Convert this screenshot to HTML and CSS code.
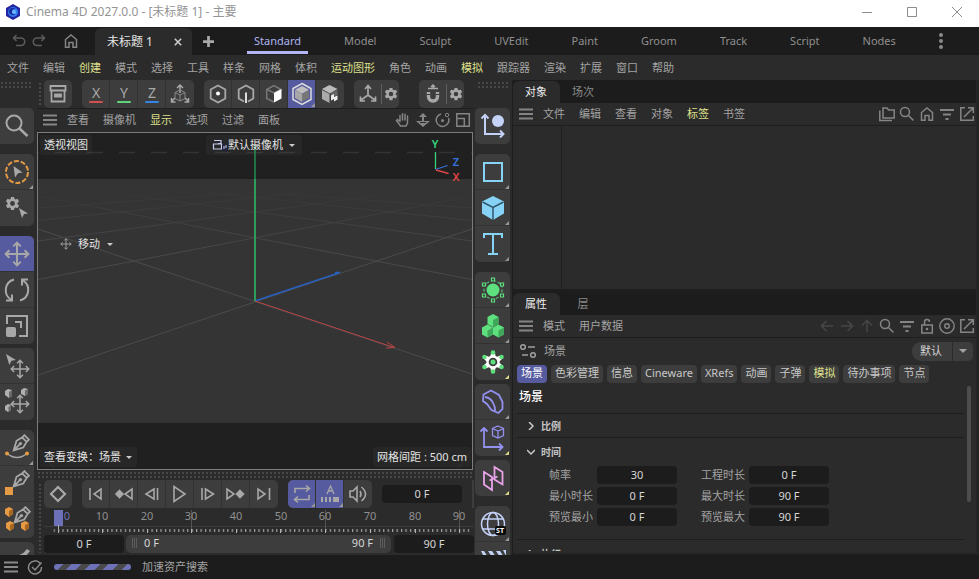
FILE: index.html
```html
<!DOCTYPE html>
<html lang="zh-CN">
<head>
<meta charset="utf-8">
<title>Cinema 4D 2027.0.0 - [未标题 1] - 主要</title>
<link rel="stylesheet" href="styles.css">
</head>
<body>
<svg class="defs" aria-hidden="true">
  <symbol id="gear" viewBox="-8 -8 16 16"><path fill="currentColor" fill-rule="evenodd" d="M-1.6-7h3.2l.5 2.2 1.2.6 2.1-.8 1.6 2.8-1.7 1.5v1.4l1.7 1.5-1.6 2.8-2.1-.8-1.2.6-.5 2.2h-3.2l-.5-2.2-1.2-.6-2.1.8-1.6-2.8 1.7-1.5v-1.4l-1.7-1.5 1.6-2.8 2.1.8 1.2-.6zM0-2.6a2.6 2.6 0 1 0 0 5.2 2.6 2.6 0 0 0 0-5.2z"/></symbol>
  <symbol id="burger" viewBox="0 0 16 16"><path d="M1 3.500h14M1 8h14M1 12.500h14" stroke="currentColor" stroke-width="2"/></symbol>
  <symbol id="search" viewBox="0 0 16 16"><g fill="none" stroke="currentColor" stroke-width="1.500"><circle cx="6" cy="6" r="4.500"/><path d="M9.500 9.500l5 5"/></g></symbol>
  <symbol id="home" viewBox="0 0 16 16"><path fill="none" stroke="currentColor" stroke-width="1.500" d="M2.500 14.200V6.500L8 2l5.500 4.500v7.700h-3.500V9.500H6v4.700z"/></symbol>
  <symbol id="filter" viewBox="0 0 16 16"><path stroke="currentColor" stroke-width="2" d="M1 4h14M4 8.500h8M6.500 13h3"/></symbol>
  <symbol id="popout" viewBox="0 0 16 16"><path fill="none" stroke="currentColor" stroke-width="1.500" d="M6 1.800H1.800v12.500h12.500V10M9 1.800h5.300V7M14 2L5 11"/></symbol>
  <symbol id="cursor" viewBox="0 0 10 10"><path fill="currentColor" d="M0 0l9 5.500-4 .6-2 3.900z"/></symbol>
  <symbol id="move" viewBox="-12 -12 24 24"><path fill="none" stroke="currentColor" stroke-width="1.800" d="M0-10V10M-10 0H10M-3.500-7L0-10.500 3.500-7M-3.500 7L0 10.500 3.500 7M-7-3.500L-10.500 0-7 3.500M7-3.500L10.500 0 7 3.500"/></symbol>
  <symbol id="nib" viewBox="0 0 16 16"><path fill="none" stroke="currentColor" stroke-width="1.600" d="M1.500 14.500L4 6l5-3 4 4-3 5zM1.500 14.500L7 9M9.500 2.500l1.500-1.500 4 4-1.500 1.500"/><circle cx="7.500" cy="8.500" r="1.500" fill="currentColor"/></symbol>
  <symbol id="caret" viewBox="0 0 8 8"><path fill="currentColor" d="M1 3h6L4 6z"/></symbol>
</svg>

<header class="titlebar">
  <svg class="logo" viewBox="0 0 16 16"><path d="M8 0l7 4v8l-7 4-7-4V4z" fill="#2425a0"/><circle cx="8" cy="8" r="5" fill="#2f7df0"/><path d="M4 6.500C5 3.500 9 3 11 5c-3-1-4 1-4 2.500s1 3 3.500 3C7 12.500 3.500 10 4 6.500z" fill="#1a2b9e"/><circle cx="9" cy="8" r="2" fill="#6cb8ff"/></svg>
  <h1>Cinema 4D 2027.0.0 - [未标题 1] - 主要</h1>
  <div class="winbtns">
    <button aria-label="最小化"><svg viewBox="0 0 12 12"><path d="M1 6.500h10"/></svg></button>
    <button aria-label="最大化"><svg viewBox="0 0 12 12"><path d="M1.500 1.500h9v9h-9z"/></svg></button>
    <button aria-label="关闭"><svg viewBox="0 0 12 12"><path d="M1 1l10 10M11 1L1 11"/></svg></button>
  </div>
</header>

<nav class="tabbar" aria-label="工作区">
  <div class="history">
    <button class="dim" aria-label="撤销"><svg class="i16" viewBox="0 0 16 16"><path fill="none" stroke="currentColor" stroke-width="1.500" d="M5.500 2L2.500 5l3 3M2.500 5H10a3.500 3.500 0 0 1 0 7.500H5"/></svg></button>
    <button class="dim" aria-label="重做"><svg class="i16" viewBox="0 0 16 16"><path fill="none" stroke="currentColor" stroke-width="1.500" d="M10.500 2l3 3-3 3M13.500 5H6a3.500 3.500 0 0 0 0 7.500h5"/></svg></button>
  </div>
  <button class="homebtn" aria-label="主页"><svg class="i16"><use href="#home"/></svg></button>
  <div class="doctab"><span>未标题 1</span><button aria-label="关闭标签"><svg viewBox="0 0 10 10"><path d="M1 1l8 8M9 1L1 9" stroke="currentColor" stroke-width="2"/></svg></button></div>
  <button class="plus" aria-label="新建"><svg viewBox="0 0 12 12"><path d="M6 0v12M0 6h12" stroke="currentColor" stroke-width="3"/></svg></button>
  <div class="spaces">
    <button class="on">Standard</button><button>Model</button><button>Sculpt</button><button>UVEdit</button><button>Paint</button><button>Groom</button><button>Track</button><button>Script</button><button>Nodes</button>
  </div>
  <button class="dots" aria-label="更多"><svg class="i16" viewBox="0 0 16 16" fill="currentColor"><circle cx="8" cy="2" r="2"/><circle cx="8" cy="8" r="2"/><circle cx="8" cy="14" r="2"/></svg></button>
</nav>

<nav class="menu mainmenu" aria-label="主菜单">
  <button>文件</button><button>编辑</button><button class="hl">创建</button><button>模式</button><button>选择</button><button>工具</button><button>样条</button><button>网格</button><button>体积</button><button class="hl">运动图形</button><button>角色</button><button>动画</button><button class="hl">模拟</button><button>跟踪器</button><button>渲染</button><button>扩展</button><button>窗口</button><button>帮助</button>
</nav>

<main class="work">
  <div class="toolbar">
    <i class="grip gtop"></i><i class="grip gside"></i>
    <div class="grp"><button aria-label="资产"><svg viewBox="0 0 28 28"><path fill="none" stroke="currentColor" stroke-width="1.800" d="M6.500 6h15v4.500h-15zM7.500 10.500v11h13v-11M11 14.500h6v2h-6z"/></svg></button></div>
    <div class="grp axes">
      <button class="ax x">X</button><button class="ax y">Y</button><button class="ax z">Z</button>
      <button aria-label="坐标系"><svg viewBox="0 0 28 28" fill="none" stroke="currentColor"><path stroke-width="1.500" d="M14 6v7M11 8l3-3 3 3M9 18l-3.500 3.500M5.500 18v4h4M19 18l3.500 3.500M22.500 18v4h-4"/><path stroke="#8a8a8a" d="M14 10l5 2.500v6L14 21l-5-2.500v-6zM9 12.500l5 2.500 5-2.500M14 15v6"/></svg></button>
    </div>
    <div class="grp">
      <button aria-label="点"><svg viewBox="0 0 28 28"><path fill="none" stroke="currentColor" stroke-width="1.800" d="M14 5.500l7.300 4v9l-7.300 4-7.300-4v-9z"/><circle cx="14" cy="13.500" r="2" fill="#fff"/></svg></button>
      <button aria-label="边"><svg viewBox="0 0 28 28"><path fill="none" stroke="currentColor" stroke-width="1.800" d="M12 21.500l-5.300-3v-9l7.300-4 7.300 4v9l-5.300 3"/><path d="M14 12.500V23" stroke="#ddd" stroke-width="2"/></svg></button>
      <button aria-label="多边形"><svg viewBox="0 0 28 28"><path fill="none" stroke="#777" stroke-width="1.500" d="M14 22l-7.300-3.500v-9L14 5.500l7 4-7 3.500-7-3.500"/><path d="M14 13l7.500-4v9.500l-7.500 4z" fill="#fff"/></svg></button>
      <button class="active more" aria-label="模型"><svg viewBox="0 0 28 28"><path d="M14 3.500l9 5v11l-9 5-9-5v-11z" fill="none" stroke="#ddd" stroke-width="1.500"/><path d="M14 6l7 3.800-7 3.900-7-3.900z" fill="#bdbdbd"/><path d="M7 10l7 4v8l-7-4z" fill="#a7a7a7"/><path d="M21 10l-7 4v8l7-4z" fill="#777"/></svg></button>
      <button aria-label="纹理"><svg viewBox="0 0 28 28"><path d="M13.500 5l8 4-7.500 4.500L6 9z" fill="#bbb"/><path d="M6 10l7.500 4v9L6 19z" fill="#aaa"/><path d="M15 13l6.500-3v5l-6.500 3z" fill="#666"/><path d="M15 15.500l3-1.500v3l3.500-1.500v4L18 21.500V19l-3 1.500z" fill="#eee"/></svg></button>
    </div>
    <div class="grp split"><button aria-label="轴"><svg viewBox="0 0 28 28" fill="none" stroke="currentColor" stroke-width="1.700"><path d="M14 6v9L6.500 20.500M14 15l7.500 5.500M11 9l3-3.500L17 9M6.500 16.500v4.500h4.500M21.500 16.500v4.500H17"/></svg></button><button class="narrow" aria-label="轴设置"><svg class="i16"><use href="#gear"/></svg></button></div>
    <div class="grp split snap"><button aria-label="捕捉"><svg viewBox="0 0 28 28"><path fill="none" stroke="currentColor" stroke-width="3.400" d="M9.500 12v4.500a4.500 4.500 0 0 0 9 0V12"/><path d="M7.500 14.500h4M16.500 14.500h4" stroke="#3b3b3b"/><path d="M9 8.500h10M14 9V5M12 7l2-2 2 2" fill="none" stroke="currentColor" stroke-width="1.500"/></svg></button><button class="narrow" aria-label="捕捉设置"><svg class="i16"><use href="#gear"/></svg></button></div>
    <i class="grip gend"></i>
  </div>

  <aside class="palette left" aria-label="工具">
    <div class="pg"><button aria-label="搜索"><svg viewBox="0 0 28 28" fill="none" stroke="currentColor" stroke-width="2"><circle cx="11" cy="11" r="7.500"/><path d="M16.500 16.500l8 7.500" stroke-width="2.500"/></svg></button></div>
    <div class="pg big">
      <button class="more" aria-label="实时选择"><svg viewBox="0 0 28 28"><circle cx="14" cy="14" r="11" fill="none" stroke="#e59a45" stroke-width="2" stroke-dasharray="5 1.910"/><path d="M10.500 8l9 6.500-4.500.8-3 4.200z" fill="currentColor"/></svg></button>
      <button aria-label="选择设置"><svg viewBox="0 0 28 28"><use href="#gear" x="2" y="2" width="15" height="15"/><use href="#cursor" x="16" y="13" width="10" height="12"/></svg></button>
    </div>
    <div class="pg big">
      <button class="active" aria-label="移动"><svg viewBox="0 0 28 28"><use href="#move" x="1" y="1" width="26" height="26"/></svg></button>
      <button aria-label="旋转"><svg viewBox="0 0 28 28" fill="none" stroke="currentColor" stroke-width="2"><path d="M11 3.500A11 11 0 0 0 8 23.500M17 24.500A11 11 0 0 0 20 4.500M3 24.500h6v-6M25 3.500h-6v6"/></svg></button>
      <button aria-label="缩放"><svg viewBox="0 0 28 28"><path fill="none" stroke="currentColor" stroke-width="2" d="M4 12V4h20v20h-8M12 10h6v6"/><rect x="3" y="15" width="10" height="10" rx="2" fill="currentColor"/></svg></button>
    </div>
    <div class="pg tight">
      <button aria-label="放置"><svg viewBox="0 0 28 28"><use href="#cursor" x="3" y="2" width="11" height="11"/><use href="#move" x="7" y="7" width="20" height="20"/></svg></button>
      <button aria-label="动态放置"><svg viewBox="0 0 28 28"><g fill="#b0b0b0"><path d="M2 3l3-2 4 1v6l-3 2-4-3zM18 2l3-2 4 1v5l-3 2-4-2zM2 18l3-2 3 1v5l-3 2-3-2z"/></g><path d="M6 4l3-2v6l-3 2zM22 2.500l3-1.500v5l-3 2zM5.500 19l2.500-2v5l-2.500 1.500z" fill="#6a6a6a"/><use href="#move" x="7" y="6" width="20" height="20"/></svg></button>
    </div>
    <div class="pg big">
      <button class="more" aria-label="样条画笔"><svg viewBox="0 0 28 28"><use href="#nib" x="9" y="0" width="18" height="18"/><path d="M4 19.500q10 8 20 0" fill="none" stroke="currentColor" stroke-width="1.600"/><circle cx="4" cy="19.500" r="2" fill="#e59a45"/><circle cx="24" cy="19.500" r="2" fill="#e59a45"/></svg></button>
      <button aria-label="多边形画笔"><svg viewBox="0 0 28 28"><use href="#nib" x="9" y="0" width="18" height="18"/><rect x="2" y="17" width="8" height="8" fill="#e59a45"/></svg></button>
      <button aria-label="体素画笔"><svg viewBox="0 0 28 28"><use href="#nib" x="10" y="0" width="18" height="18"/><g fill="#e59a45"><path d="M2 3l4-2 4 2v5l-4 3-4-3zM3 17l4-2 4 2v5l-4 3-4-3zM18 17l4-2 4 2v5l-4 3-4-3z"/></g><path d="M6 5l4-2v5l-4 3zM7 19l4-2v5l-4 3zM22 19l4-2v5l-4 3z" fill="#a9661f"/></svg></button>
    </div>
    <div class="pg tight"><button aria-label="刷子"><svg viewBox="0 0 28 28"><path d="M12 10q8-1 12-7l3 2q-5 7-12 10z" fill="currentColor"/></svg></button></div>
  </aside>

  <section class="center">
    <div class="menu viewmenu">
      <button aria-label="菜单" class="ico"><svg class="i16"><use href="#burger"/></svg></button>
      <button>查看</button><button>摄像机</button><button class="hl">显示</button><button>选项</button><button>过滤</button><button>面板</button>
      <div class="icons">
        <button aria-label="平移"><svg class="i16" viewBox="0 0 16 16"><path fill="none" stroke="currentColor" stroke-width="1.500" stroke-linecap="round" d="M5 9V3.500M7.500 8V1.800M10 8V2.200M12.500 9V4M5 9.500L2.500 7.500 1.500 8.500 5.500 14h5.500l1.500-3V8"/></svg></button>
        <button aria-label="推拉"><svg class="i16" viewBox="0 0 16 16"><path fill="currentColor" d="M8 1l4 4H9v4h6l-7 6-7-6h6V5H4z"/><path d="M5 10.500h6" stroke="#2b2b2b"/></svg></button>
        <button aria-label="环绕"><svg class="i16" viewBox="0 0 16 16"><path fill="none" stroke="currentColor" stroke-width="1.500" d="M6 2a6.300 6.300 0 1 0 7.500 4"/><circle cx="7.500" cy="8.500" r="1.500" fill="currentColor"/><circle cx="12" cy="3" r="1.700" fill="none" stroke="currentColor"/></svg></button>
        <button aria-label="四视图"><svg class="i16" viewBox="0 0 16 16"><path fill="none" stroke="currentColor" stroke-width="1.500" d="M1.800 1.800h12.500v12.500H1.800zM1.800 6.500h7.500v7.800"/></svg></button>
      </div>
    </div>
    <div class="viewport">
      <svg class="scene" viewBox="38 133 434 336" preserveAspectRatio="xMidYMid slice">
        <defs><linearGradient id="fade" gradientUnits="userSpaceOnUse" x1="0" y1="186" x2="0" y2="250"><stop offset="0" stop-color="#343434"/><stop offset="1" stop-color="#484848"/></linearGradient></defs>
        <rect x="38" y="133" width="434" height="336" fill="#202020"/>
        <rect x="38" y="179" width="434" height="244" fill="#343434"/>
        <path d="M23 152.500H472" stroke="#333" stroke-width="1.500" stroke-dasharray="16 16"/>
        <g stroke="url(#fade)" fill="none">
          <path d="M38 279.500L472 196M472 279.500L38 196M38 241L472 183M472 241L38 183M38 220.500L300 193M472 220.500L210 193M38 208L255 192M472 208L255 192"/>
        </g>
        <path d="M38 375L472 229M38 229L472 374" stroke="#4b4b4b"/>
        <path d="M38 448l16 21M457 469l15-19" stroke="#2c2c2c"/>
        <path d="M255 301L340 272.500M335 272.500h5" stroke="#2861bd" stroke-width="1.500" fill="none"/>
        <path d="M255 301L394 347.500M387 342l8 5.500-9 .5" stroke="#b84545" fill="none"/>
        <path d="M255 145V179" stroke="#207245" stroke-width="2"/><path d="M255 179V301" stroke="#309c5b" stroke-width="2"/>
        <g fill="none" stroke-width="1.300"><path d="M435.500 152v17" stroke="#35d27a"/><path d="M435.500 169.500l12-4" stroke="#3574e0"/><path d="M436 170l12.500 3.500" stroke="#e04444"/></g>
        <g class="giz"><text x="435" y="148" fill="#35d27a">Y</text><text x="456" y="166" fill="#3574e0">Z</text><text x="456" y="181" fill="#e04444">X</text></g>
      </svg>
      <span class="vl tl">透视视图</span>
      <button class="vl tc"><svg class="i16" viewBox="0 0 16 16"><path d="M2 3.500h7v3H6M1.500 7v5h8V7zM9.500 9H14" fill="none" stroke="#c4cdee" stroke-width="1.200"/><path d="M10 8h5v6h-5z" fill="#22263e"/><path d="M12 9v3M14 8v3" stroke="#c4cdee"/></svg>默认摄像机<svg class="car"><use href="#caret"/></svg></button>
      <button class="vl mv"><svg class="mvi"><use href="#move"/></svg>移动<svg class="car"><use href="#caret"/></svg></button>
      <button class="vl bl">查看变换：场景<svg class="car"><use href="#caret"/></svg></button>
      <span class="vl br">网格间距 : 500 cm</span>
    </div>
    <div class="timeline">
      <i class="grip gh"></i><i class="grip gv"></i>
      <div class="transport">
        <div class="grp"><button aria-label="记录关键帧"><svg viewBox="0 0 28 28"><path d="M14 7l7 7-7 7-7-7z" fill="none" stroke="currentColor" stroke-width="2.200"/></svg></button></div>
        <div class="grp">
          <button aria-label="转到开始"><svg viewBox="0 0 28 28" class="st"><path d="M8 8v12M19 9v10l-7-5z"/></svg></button>
          <button aria-label="上一关键帧"><svg viewBox="0 0 28 28" class="st"><path d="M22 9v10l-7-5z"/><path class="fl" d="M9.500 10.500l3.500 3.500-3.500 3.500-3.500-3.500z"/></svg></button>
          <button aria-label="上一帧"><svg viewBox="0 0 28 28" class="st"><path d="M16 9v10l-8-5zM19.500 8v12"/></svg></button>
          <button aria-label="播放"><svg viewBox="0 0 28 28" class="st"><path d="M8 6.500v15l11-7.500z"/></svg></button>
          <button aria-label="下一帧"><svg viewBox="0 0 28 28" class="st"><path d="M11.500 9v10l8-5zM8 8v12"/></svg></button>
          <button aria-label="下一关键帧"><svg viewBox="0 0 28 28" class="st"><path d="M5 9v10l7-5z"/><path class="fl" d="M18 10.500l3.500 3.500-3.500 3.500-3.500-3.500z"/></svg></button>
          <button aria-label="转到结束"><svg viewBox="0 0 28 28" class="st"><path d="M8 9v10l7-5zM19.500 8v12"/></svg></button>
        </div>
        <div class="grp">
          <button class="active more" aria-label="循环"><svg viewBox="0 0 28 28" class="st"><path d="M7 13V8.500h14M18 5.500l3.500 3-3.500 3M21 15v4.500H7M10 16.500l-3.500 3 3.500 3"/></svg></button>
          <button class="active more" aria-label="自动关键帧"><svg viewBox="0 0 28 28"><path d="M11 14l3.500-8 3.500 8M12.500 11h4" fill="none" stroke="currentColor" stroke-width="1.300"/><path d="M5 17h2v5H5zM9 17h2v5H9zM13 17h2v5h-2zM17 17h6v5h-6z" fill="currentColor"/></svg></button>
          <button aria-label="声音"><svg viewBox="0 0 28 28" class="st"><path d="M6 11v6h3l4 4V7l-4 4zM16 11q2 3 0 6M17.500 7q8 7 0 14"/></svg></button>
        </div>
        <input class="fld cur" aria-label="当前帧" value="0 F"><i class="stub"></i>
      </div>
      <svg class="ruler" viewBox="44 508 430 27" preserveAspectRatio="xMinYMid meet">
        <defs><pattern id="ticks" patternUnits="userSpaceOnUse" x="53.500" y="529" width="4.455" height="4"><rect width="1.200" height="3" fill="#a0a0a0"/></pattern></defs>
        <path d="M44 526.500h430" stroke="#3a3a3a"/>
        <rect x="53.500" y="529" width="416" height="3" fill="url(#ticks)"/>
        <rect x="54" y="510" width="9" height="16" fill="#6d72b8"/>
        <path d="M191.500 510v22M325.500 510v22M459.500 510v22" stroke="#555"/>
        <path d="M58.500 525v8M102.500 529v4M147.500 529v4M191.500 529v4M236.500 529v4M280.500 529v4M325.500 529v4M370.500 529v4M415.500 529v4M459.500 529v4" stroke="#b0b0b0"/>
        <g class="nums"><text x="67" y="520" class="now">0</text><text x="102" y="520">10</text><text x="147" y="520">20</text><text x="191" y="520">30</text><text x="236" y="520">40</text><text x="281" y="520">50</text><text x="325" y="520">60</text><text x="370" y="520">70</text><text x="415" y="520">80</text><text x="459" y="520">90</text></g>
      </svg>
      <div class="range"><input class="fld" aria-label="起始帧" value="0 F"><div class="bar"><i></i><span>0 F</span><span class="end">90 F</span><i></i></div><input class="fld" aria-label="结束帧" value="90 F"></div>
    </div>
  </section>

  <aside class="palette right" aria-label="创建">
    <div class="pg"><button aria-label="坐标"><svg viewBox="0 0 28 28" fill="none" stroke="#c5d2f8" stroke-width="2"><path d="M6 3v19h18M2.500 6.500L6 3l3.500 3.500M21 18.500l3.500 3.500-3.500 3.500"/><circle cx="19" cy="9" r="6" fill="#c5d2f8" stroke="none"/></svg></button></div>
    <div class="pg big">
      <button class="more" aria-label="样条"><svg viewBox="0 0 28 28"><path d="M5 5h18v18H5z" fill="none" stroke="#86d3f5" stroke-width="2"/></svg></button>
      <button class="more" aria-label="立方体"><svg viewBox="0 0 28 28"><path d="M14 2l11 5.500v12L14 26 3 19.500v-12z" fill="#86d3f5"/><path d="M3.500 8L14 13.500 24.500 8M14 13.500V26" fill="none" stroke="#30566a" stroke-width="1.500"/></svg></button>
      <button class="more" aria-label="文本"><svg viewBox="0 0 28 28"><path d="M5 8V4h18v4M14 4v20M9 24h10" fill="none" stroke="#86d3f5" stroke-width="2"/></svg></button>
    </div>
    <div class="pg big">
      <button class="more" aria-label="生成器"><svg viewBox="0 0 28 28"><circle cx="14" cy="14" r="6.500" fill="#5fe07e"/><path d="M14 4l9 4.500v11L14 24l-9-4.500v-11z" fill="none" stroke="#5fe07e" stroke-dasharray="3 2"/><g fill="#3b3b3b" stroke="#5fe07e" stroke-width="1.200"><path d="M12.500 2h3v3h-3zM12.500 23h3v3h-3zM3.500 7h3v3h-3zM21.500 7h3v3h-3zM3.500 18h3v3h-3zM21.500 18h3v3h-3z"/></g></svg></button>
      <button class="more" aria-label="克隆"><svg viewBox="0 0 28 28"><g fill="#5fe07e"><path d="M14 2l5.500 3v7L14 15l-5.500-3V5zM8.500 12.500l5.500 3v7l-5.500 3-5.500-3v-7zM19.500 12.500l5.500 3v7l-5.500 3-5.500-3v-7z"/></g><path d="M14 8l5.500-3v7L14 15zM8.500 18.500l5.500-3v7l-5.500 3zM19.500 18.500l5.500-3v7l-5.500 3z" fill="#3fa75a"/></svg></button>
      <button class="more yel" aria-label="效果器"><svg viewBox="0 0 28 28"><g color="#fff"><use href="#gear" x="4" y="4" width="20" height="20"/></g><circle cx="14" cy="14" r="4.300" fill="#3d3d3d"/><g fill="#5fe07e"><circle cx="14" cy="14" r="2.500"/><circle cx="14" cy="4.500" r="2.300"/><circle cx="14" cy="23.500" r="2.300"/><circle cx="5.500" cy="9" r="2.300"/><circle cx="22.500" cy="9" r="2.300"/><circle cx="5.500" cy="19" r="2.300"/><circle cx="22.500" cy="19" r="2.300"/></g></svg></button>
    </div>
    <div class="pg tight">
      <button class="more" aria-label="变形器"><svg viewBox="0 0 28 28"><path d="M12 2.500l8 4.500 3.500 7v7l-4 4-7-3-4.500-6-4-3 .500-6.500zM6 9q6 1 8 6 2.500 4 2 8" fill="none" stroke="#9390f0" stroke-width="1.800"/></svg></button>
      <button class="more yel" aria-label="域"><svg viewBox="0 0 28 28" fill="none" stroke="#9390f0" stroke-width="1.800"><path d="M5 4v19h18M1.500 7.500L5 4l3.500 3.500M20 19.500l3.500 3.500-3.500 3.500"/><path stroke-width="1.300" d="M19 2l5.500 2.500v7L19 14l-5.500-2.500v-7zM13.500 4.500l5.500 2.500 5.500-2.500M19 7v7"/></svg></button>
    </div>
    <div class="pg tight"><button class="more yel" aria-label="对称"><svg viewBox="0 0 28 28"><path d="M5 8l8 5v13l-8-5.500zM15.500 3l8 5v12.500l-8-5zM10.500 16.500l8-4" fill="none" stroke="#e9a3e9" stroke-width="1.800"/></svg></button></div>
    <div class="pg big">
      <button class="more" aria-label="环境"><svg viewBox="0 0 28 28" fill="none" stroke="#c5d2f8" stroke-width="1.500"><circle cx="14" cy="14" r="11.500"/><ellipse cx="14" cy="14" rx="5.500" ry="11.500"/><path d="M4 9h20M4 19h20"/><rect x="16" y="16" width="11" height="9" rx="2" fill="#0a0a0a" stroke="none"/><text x="21" y="23" class="badge">ST</text></svg></button>
      <button aria-label="场记板"><svg viewBox="0 0 28 28"><path d="M2 5h3l4 6H5zM9 5h4l4 6h-4zM17 5h4l4 6h-4zM24 4h3v6z" fill="#c5d2f8"/></svg></button>
    </div>
  </aside>

  <section class="panels">
    <div class="ptabs"><button class="on">对象</button><button>场次</button></div>
    <div class="menu pmenu">
      <button aria-label="菜单" class="ico"><svg class="i16"><use href="#burger"/></svg></button>
      <button>文件</button><button>编辑</button><button>查看</button><button>对象</button><button class="hl">标签</button><button>书签</button>
      <div class="icons">
        <button aria-label="文件夹"><svg class="i16" viewBox="0 0 16 16"><path fill="none" stroke="currentColor" stroke-width="1.500" d="M4 2h4l1.500 2H15.200v8H4zM.8 4.500v10H13"/></svg></button>
        <button aria-label="搜索"><svg class="i16"><use href="#search"/></svg></button>
        <button aria-label="主页"><svg class="i16"><use href="#home"/></svg></button>
        <button aria-label="过滤"><svg class="i16"><use href="#filter"/></svg></button>
        <button aria-label="弹出"><svg class="i16"><use href="#popout"/></svg></button>
      </div>
    </div>
    <div class="objlist"></div>
    <div class="ptabs"><button class="on">属性</button><button>层</button></div>
    <div class="menu pmenu">
      <button aria-label="菜单" class="ico"><svg class="i16"><use href="#burger"/></svg></button>
      <button>模式</button><button>用户数据</button>
      <div class="icons">
        <button class="off" aria-label="后退"><svg class="i16" viewBox="0 0 16 16"><path fill="none" stroke="currentColor" stroke-width="1.500" d="M14 8H2.500M7.500 3l-5 5 5 5"/></svg></button>
        <button class="off" aria-label="前进"><svg class="i16" viewBox="0 0 16 16"><path fill="none" stroke="currentColor" stroke-width="1.500" d="M2 8h11.500M8.500 3l5 5-5 5"/></svg></button>
        <button class="off" aria-label="向上"><svg class="i16" viewBox="0 0 16 16"><path fill="none" stroke="currentColor" stroke-width="1.500" d="M8 14V2.500M3 7.500l5-5 5 5"/></svg></button>
        <button aria-label="搜索"><svg class="i16"><use href="#search"/></svg></button>
        <button aria-label="过滤"><svg class="i16"><use href="#filter"/></svg></button>
        <button aria-label="锁定"><svg class="i16" viewBox="0 0 16 16"><path fill="none" stroke="currentColor" stroke-width="1.500" d="M2.800 7h10.500v8H2.800zM5.500 7V4q0-2.500 2.500-2.500T10.500 4"/><circle cx="8" cy="11" r="1.300" fill="currentColor"/></svg></button>
        <button aria-label="目标"><svg class="i16" viewBox="0 0 16 16" fill="none" stroke="currentColor" stroke-width="1.400"><circle cx="8" cy="8" r="7.200"/><circle cx="8" cy="8" r="2.300"/></svg></button>
        <button aria-label="弹出"><svg class="i16"><use href="#popout"/></svg></button>
      </div>
    </div>
    <div class="attr">
      <div class="ahead">
        <svg class="sico" viewBox="0 0 18 16"><g fill="none" stroke="#a0a0a0" stroke-width="1.500"><circle cx="4" cy="4" r="2.300"/><path d="M9 4h7M3 12h6"/><circle cx="14" cy="12" r="2.300"/></g></svg>
        <span>场景</span>
        <label class="sel"><select aria-label="预设"><option>默认</option></select><svg class="car" viewBox="0 0 8 8"><path fill="currentColor" d="M0 2h8L4 6z"/></svg></label>
      </div>
      <div class="chips"><button class="on">场景</button><button>色彩管理</button><button>信息</button><button>Cineware</button><button>XRefs</button><button>动画</button><button>子弹</button><button class="hl">模拟</button><button>待办事项</button><button>节点</button></div>
      <div class="scroll">
        <div class="abody">
          <h2>场景</h2>
          <section class="fold"><h3><svg viewBox="0 0 8 8"><path d="M2 0l4 4-4 4"/></svg>比例</h3></section>
          <section class="fold roomy"><h3><svg viewBox="0 0 8 8"><path d="M0 2l4 4 4-4"/></svg>时间</h3>
            <div class="form">
              <label for="f1">帧率</label><input class="fld" id="f1" value="30"><label for="f2">工程时长</label><input class="fld" id="f2" value="0 F">
              <label for="f3">最小时长</label><input class="fld" id="f3" value="0 F"><label for="f4">最大时长</label><input class="fld" id="f4" value="90 F">
              <label for="f5">预览最小</label><input class="fld" id="f5" value="0 F"><label for="f6">预览最大</label><input class="fld" id="f6" value="90 F">
            </div>
          </section>
          <section class="fold roomy"><h3><svg viewBox="0 0 8 8"><path d="M2 0l4 4-4 4"/></svg>执行</h3></section>
        </div>
        <i class="thumb"></i>
      </div>
    </div>
  </section>
</main>

<footer class="status">
  <button aria-label="菜单"><svg class="i16"><use href="#burger"/></svg></button>
  <svg class="i16 ok" viewBox="0 0 16 16"><path fill="none" stroke="currentColor" stroke-width="1.500" d="M13 4.200A6.500 6.500 0 1 0 14.500 8M5 8l3 3 6.500-7.500"/></svg>
  <div class="prog" role="progressbar" aria-label="加速资产搜索"></div>
  <span>加速资产搜索</span>
</footer>
</body>
</html>
```
FILE: styles.css
```css
* { box-sizing: border-box; }
body {
  margin: 0; height: 100vh; display: flex; flex-direction: column; overflow: hidden;
  background: #1c1c1c; color: #a3a3a3;
  font: 11px/16px "Noto Sans", "Noto Sans CJK SC", sans-serif;
}
button, input, select { font: inherit; color: inherit; border: 0; background: none; padding: 0; margin: 0; }
button { display: flex; align-items: center; justify-content: center; white-space: nowrap; }
h1, h2, h3 { margin: 0; font-size: inherit; }
svg { display: block; flex: none; }
.defs { position: absolute; width: 0; height: 0; }
.i16 { width: 16px; height: 16px; }
.car { width: 8px; height: 8px; }

/* Window title and workspace tabs */
.titlebar { flex: none; height: 27px; background: #fff; display: flex; align-items: center; padding: 0 16px 4px 5px; }
.logo { width: 16px; height: 16px; }
.titlebar h1 { margin-left: 5px; font-size: 12px; font-weight: 400; color: #949494; }
.winbtns { margin-left: auto; display: flex; gap: 33px; }
.winbtns svg { width: 12px; height: 12px; fill: none; stroke: #8c8c8c; }

.tabbar { flex: none; height: 28px; display: flex; align-items: center; background: #1c1c1c; }
.history { display: flex; gap: 4px; margin-left: 11px; }
.dim { color: #5c5c5c; }
.homebtn { margin-left: 16px; color: #858585; }
.doctab { align-self: stretch; margin: 1px 0 0 16px; width: 97px; padding: 0 10px 0 12px; display: flex; align-items: center; justify-content: space-between; border-radius: 6px 6px 0 0; background: #2b2b2b; color: #e6e6e6; font-size: 12px; }
.doctab svg { width: 8px; height: 8px; color: #ccc; }
.plus { margin-left: 11px; color: #a8a8a8; }
.plus svg { width: 11px; height: 11px; }
.spaces { align-self: stretch; display: flex; gap: 29px; margin-left: 33px; }
.spaces button { padding: 0 7px; color: #8f8f8f; }
.spaces .on { color: #aeb4f0; box-shadow: inset 0 -3px #b3b5f5; height: 27px; }
.dots { margin: 0 30px 0 auto; color: #8a8a8a; }

/* Menu rows */
.menu { display: flex; align-items: center; gap: 14px; }
.menu button { height: 100%; }
.menu .hl { color: #dfe08c; }
.mainmenu { flex: none; height: 25px; padding: 0 7px; background: #2b2b2b; }
.icons { margin-left: auto; display: flex; gap: 4px; height: 100%; color: #858585; }
.icons .off { color: #474747; }
.ico { color: #858585; margin-right: -5px; }

.work {
  flex: 1; min-height: 0; display: grid; background: #2b2b2b;
  grid-template: 28px minmax(0, 1fr) / 37px minmax(0, 437fr) 38px minmax(0, 467fr);
}

/* Button groups */
.toolbar { grid-area: 1 / 1 / 2 / 4; display: flex; }
.grip { background: radial-gradient(circle, #484848 1px, transparent 1px) 0 0 / 4px 4px; }
.gtop { width: 32px; height: 8px; margin: 1px 4px 0 0; }
.gside { width: 4px; height: 24px; margin: 2px 2px 0 2px; }
.gend { width: 32px; height: 8px; margin: 1px 3px 0 auto; }
.grp { display: flex; height: 28px; border-radius: 5px; background: #3d3d3d; color: #a8a8a8; overflow: hidden; }
.grp button { position: relative; width: 28px; }
.grp button + button { box-shadow: -1px 0 #323232; }
.grp svg:not(.i16) { width: 28px; height: 28px; }
.toolbar .grp { margin-right: 10px; }
.toolbar .split { width: 45px; }
.toolbar .split .narrow { width: 17px; box-shadow: -1px 0 #606060; height: 20px; align-self: center; }
.narrow svg { width: 14px; height: 14px; }
.toolbar .snap { margin-left: 10px; }
.grp .active, .pg .active { background: #565a9e; }
.ax { font-size: 14px; line-height: 20px; padding-bottom: 2px; }
.ax::after { content: ""; position: absolute; left: 7px; right: 7px; bottom: 5px; height: 2px; border-radius: 1px; background: currentColor; }
.x::after { color: #d05050; } .y::after { color: #5fd27a; } .z::after { color: #3584e4; }
.more { position: relative; }
.more::before { content: ""; position: absolute; right: 1px; bottom: 1px; border: 2px solid transparent; border-right-color: #999; border-bottom-color: #999; z-index: 1; }
.pg .yel::before { border-right-color: #dfe08c; border-bottom-color: #dfe08c; }

/* Tool palettes */
.palette { min-height: 0; overflow: hidden; display: flex; flex-direction: column; }
.left { padding-right: 3px; }
.right { padding: 0 2px 0 1px; }
.pg { flex: none; border-radius: 5px; background: #3d3d3d; overflow: hidden; color: #a8a8a8; }
.left .pg { border-radius: 0 5px 5px 0; }
.pg.big { margin-top: 10px; }
.pg.tight { margin-top: 4px; }
.pg button { width: 100%; height: 36px; }
.pg button + button { box-shadow: 0 -1px #323232; }
.pg svg { width: 28px; height: 28px; }
.badge { font: 700 7px "Noto Sans", sans-serif; fill: #fff; stroke: none; text-anchor: middle; }

/* Viewport */
.center { min-height: 0; display: flex; flex-direction: column; }
.viewmenu { flex: none; height: 24px; padding: 0 3px 1px 5px; border-top: 1px solid #1e1e1e; }
.viewport { flex: 1; min-height: 0; position: relative; border: 1px solid #7c7c7c; margin-right: 1px; }
.scene { width: 100%; height: 100%; }
.giz { font: 600 11px "Noto Sans", sans-serif; text-anchor: middle; }
.vl { position: absolute; height: 20px; padding: 0 4px; display: flex; align-items: center; gap: 4px; color: #e3e3e3; border-radius: 3px; background: rgba(255, 255, 255, .03); white-space: nowrap; }
.vl .car { color: #ccc; }
.tl { left: 2px; top: 2px; }
.tc { right: 170px; top: 2px; gap: 0; padding: 0 6px; }
.tc .car { margin-left: 5px; }
.mv { left: 18px; top: 101px; gap: 6px; background: none; }
.mvi { width: 12px; height: 12px; color: #aaa; }
.bl { left: 2px; bottom: 2px; }
.br { right: 1px; bottom: 2px; }

/* Timeline */
.timeline { flex: none; display: grid; grid-template: 10px 28px 27px 18px / 7px minmax(0, 1fr); padding-bottom: 2px; }
.gh { grid-area: 1 / 1 / 2 / 3; margin: 1px 1px 1px 0; }
.gv { grid-area: 2 / 1 / 5 / 2; margin: 3px 2px 0 1px; }
.transport { display: flex; gap: 10px; align-items: center; }
.st { fill: none; stroke: currentColor; stroke-width: 1.600; }
.fl { fill: currentColor; }
.fld { width: 80px; height: 18px; border-radius: 4px; background: #1c1c1c; color: #d6d6d6; text-align: center; padding-bottom: 2px; }
.stub { margin-left: auto; width: 2px; height: 28px; background: #3d3d3d; }
.ruler { grid-column: 2; width: 100%; height: 27px; }
.nums { font: 11px "Noto Sans", sans-serif; fill: #8f8f8f; text-anchor: middle; }
.now { fill: #6d72b8; }
.range { grid-column: 2; display: flex; gap: 2px; }
.bar { flex: 1; margin-right: 1px; border-radius: 5px; background: #3d3d3d; color: #d6d6d6; display: flex; align-items: center; gap: 7px; padding: 0 6px 2px; }
.bar i { width: 5px; height: 10px; background: repeating-linear-gradient(90deg, #5c5c5c 0 1px, transparent 1px 2px); }
.bar .end { margin-left: auto; }

/* Object and attribute managers */
.panels { grid-area: 1 / 4 / 3 / 5; min-height: 0; display: flex; flex-direction: column; border-left: 1px solid #1e1e1e; border-right: 3px solid #242424; }
.ptabs { flex: none; height: 23px; display: flex; background: #1c1c1c; }
.ptabs button { width: 47px; color: #8a8a8a; padding-right: 1px; }
.ptabs .on { background: #2b2b2b; color: #ededed; border-radius: 6px 6px 0 0; margin-top: 1px; }
.pmenu { flex: none; height: 23px; padding: 0 1px 1px 5px; border-bottom: 1px solid #1e1e1e; }
.objlist { flex: 0 1 166px; border-bottom: 3px solid #1e1e1e; background: linear-gradient(#1e1e1e, #1e1e1e) 48px 0 / 1px 100% no-repeat; }
.attr { flex: 1; min-height: 0; display: flex; flex-direction: column; padding: 3px 0 2px 4px; border-bottom: 2px solid #222; }
.ahead { display: flex; align-items: center; gap: 7px; height: 20px; padding: 0 3px 0 2px; flex: none; }
.sico { width: 18px; height: 16px; }
.sel { margin-left: auto; display: grid; align-items: center; }
.sel select { grid-area: 1 / 1; appearance: none; width: 61px; height: 19px; padding-left: 8px; border-radius: 9px 5px 5px 9px; color: #d6d6d6; background: linear-gradient(90deg, #3d3d3d 40px, #2b2b2b 40px 41px, #3d3d3d 41px); }
.sel svg { grid-area: 1 / 1; justify-self: end; margin-right: 6px; pointer-events: none; }
.chips { flex: none; display: flex; gap: 4px; margin-top: 4px; }
.chips button { height: 18px; padding: 0 4px 2px; border-radius: 4px; background: #3d3d3d; color: #c8c8c8; }
.chips .on { background: #565a9e; color: #fff; }
.chips .hl { color: #dfe08c; }
.scroll { flex: 1; min-height: 0; display: flex; justify-content: space-between; align-items: flex-start; overflow: hidden; gap: 3px; padding-right: 5px; }
.abody { flex: 1; }
.abody h2 { font-size: 12px; line-height: 18px; padding: 5px 0 7px 2px; color: #fff; font-weight: 500; }
.fold { border-top: 1px solid #1e1e1e; }
.fold h3 { height: 23px; padding-left: 10px; display: flex; align-items: center; gap: 6px; color: #c4c4c4; font-size: 10px; }
.fold h3 svg { width: 8px; height: 8px; fill: none; stroke: #ccc; stroke-width: 1.500; }
.roomy h3 { height: 28px; }
.form { display: grid; grid-template-columns: 44px 80px 16px 44px 80px; gap: 3px 4px; padding: 0 0 13px 32px; }
.form label { line-height: 17px; white-space: nowrap; }
.form label:nth-of-type(even) { grid-column: 4; }
.thumb { width: 4px; height: 116px; margin-top: 3px; border-radius: 2px; background: #4d4d4d; }

/* Status line */
.status { flex: none; height: 24px; display: flex; align-items: center; padding-left: 3px; background: #1c1c1c; color: #8a8a8a; }
.ok { margin-left: 8px; }
.prog { width: 77px; height: 6px; margin: 0 11px; border-radius: 3px; background: repeating-linear-gradient(-45deg, #6d72b8 0 7px, #4a4a4a 7px 13px); }
.status span { color: #a3a3a3; }
```
